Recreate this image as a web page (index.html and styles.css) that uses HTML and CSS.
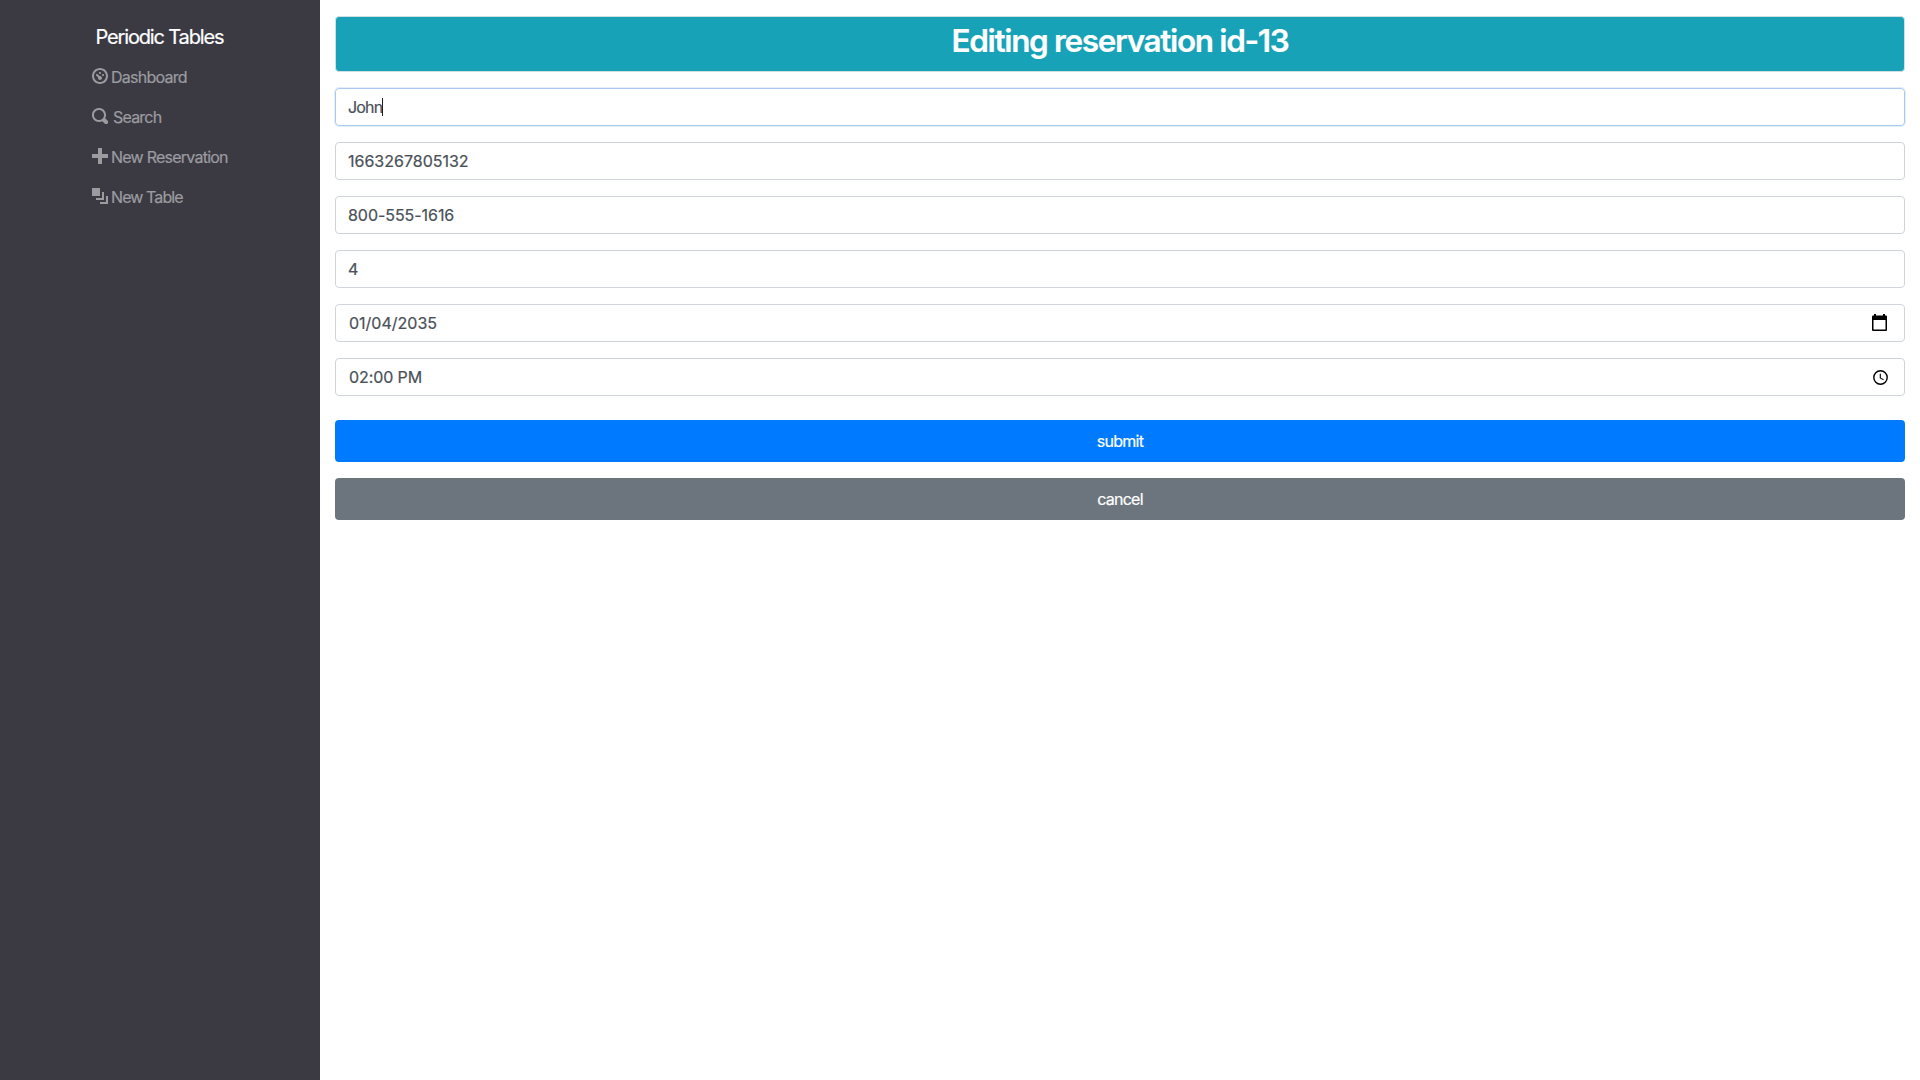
FILE: index.html
```html
<!DOCTYPE html>
<html lang="en">
<head>
<meta charset="utf-8">
<title>Periodic Tables</title>
<link rel="stylesheet" href="styles.css">
</head>
<body>
<div class="layout">
  <nav class="sidebar">
    <div class="sidebar-inner">
      <a class="brand">Periodic Tables</a>
      <ul class="menu">
        <li><svg class="icon" viewBox="0 0 8 8"><path d="M4 0c-2.2 0-4 1.8-4 4s1.8 4 4 4 4-1.8 4-4-1.8-4-4-4zm0 1c1.66 0 3 1.34 3 3s-1.34 3-3 3-3-1.34-3-3 1.34-3 3-3zm0 1c-.28 0-.5.22-.5.5s.22.5.5.5.5-.22.5-.5-.22-.5-.5-.5zm-1.66 1a.5.5 0 0 0-.19.84l.91.91c-.02.08-.06.16-.06.25 0 .55.45 1 1 1s1-.45 1-1-.45-1-1-1c-.09 0-.17.04-.25.06l-.91-.91a.5.5 0 0 0-.44-.16.5.5 0 0 0-.06 0zm3.16 0c-.28 0-.5.22-.5.5s.22.5.5.5.5-.22.5-.5-.22-.5-.5-.5z"/></svg><span class="dash">Dashboard</span></li>
        <li><svg class="icon" viewBox="0 0 8 8"><path d="M3.5 0c-1.93 0-3.5 1.57-3.5 3.5s1.57 3.5 3.5 3.5c.59 0 1.17-.14 1.66-.41a1 1 0 0 0 .13.13l1 1a1.02 1.02 0 1 0 1.44-1.44l-1-1a1 1 0 0 0-.16-.13c.27-.49.44-1.06.44-1.66 0-1.93-1.55-3.5-3.5-3.5zm0 1c1.39 0 2.5 1.11 2.5 2.5 0 .66-.24 1.27-.66 1.72-.01.01-.02.02-.03.03a1 1 0 0 0-.13.13c-.44.4-1.04.63-1.69.63-1.39 0-2.5-1.11-2.5-2.5s1.11-2.5 2.5-2.5z"/></svg><span class="search">Search</span></li>
        <li><svg class="icon" viewBox="0 0 8 8"><path d="M3 0v3h-3v2h3v3h2v-3h3v-2h-3v-3h-2z"/></svg><span class="new-reservation">New Reservation</span></li>
        <li><svg class="icon" viewBox="0 0 8 8"><path d="M0 0v4h4v-4h-4zm5 2v3h-3v1h4v-4h-1zm2 2v3h-3v1h4v-4h-1z"/></svg><span class="new-table">New Table</span></li>
      </ul>
    </div>
  </nav>
  <main class="content">
    <header class="card"><h2>Editing reservation id-13</h2></header>
    <form class="form">
      <div class="field focused"><span class="name">John</span><i class="caret"></i></div>
      <div class="field"><span class="number">1663267805132</span></div>
      <div class="field"><span class="phone">800-555-1616</span></div>
      <div class="field"><span>4</span></div>
      <div class="field picker"><span class="date">01/04/2035</span><svg class="cal" viewBox="0 0 15 17"><path fill-rule="evenodd" d="M2 0h2v1.5h7V0h2v1.5h1q1 0 1 1V16q0 1-1 1H1q-1 0-1-1V2.500q0-1 1-1h1zM1.500 6v9.500h12V6z"/></svg></div>
      <div class="field picker"><span class="time">02:00 PM</span><svg class="clock" viewBox="0 0 15 15"><circle cx="7.500" cy="7.500" r="6.700"/><path d="M7.300 3.700v4.200l3.300 2"/></svg></div>
      <button class="btn primary" type="button">submit</button>
      <button class="btn secondary" type="button">cancel</button>
    </form>
  </main>
</div>
</body>
</html>
```
FILE: styles.css
```css
* { box-sizing: border-box; }
body {
  margin: 0;
  background: #fff;
  font: 400 16px/24px Inter, "Liberation Sans", sans-serif;
  color: #495057;
  -webkit-text-stroke: .2px currentColor;
}
.layout { display: flex; min-height: 100vh; }
.sidebar {
  width: 320px;
  padding: 22px 0 0 92px;
  background: #3b3a43;
}
.sidebar-inner { display: flex; flex-direction: column; }
.brand {
  padding-left: 3.500px;
  font-size: 20px;
  line-height: 30px;
  letter-spacing: -1.150px;
  color: #fff;
  white-space: nowrap;
}
.menu { margin: 5px 0 0; padding: 0; list-style: none; color: #9c9ca0; }
.menu li { display: flex; align-items: center; height: 40px; white-space: nowrap; }
.icon { width: 16px; height: 16px; margin: -2px 3px 0 0; fill: currentColor; }
.dash { letter-spacing: -.740px; }
.new-reservation { letter-spacing: -.760px; }
.new-table { letter-spacing: -.900px; }
.search { margin-left: 2px; letter-spacing: -.800px; }
.content { flex: 1; padding: 16px 15px 0; }
.card {
  height: 56px;
  margin-bottom: 16px;
  border: 1px solid #d1dfe2;
  border-radius: 4px;
  background: #17a2b8;
  color: #fff;
  text-align: center;
}
h2 { margin: 5px 0 0; font-size: 31.500px; line-height: 38px; font-weight: 600; letter-spacing: -1.350px; }
.form { display: flex; flex-direction: column; gap: 16px; }
.field {
  display: flex;
  align-items: center;
  height: 38px;
  padding: 0 12px;
  border: 1px solid #ced4da;
  border-radius: 4px;
}
.name { letter-spacing: -.850px; }
.phone { letter-spacing: -.050px; }
.time { letter-spacing: -.100px; }
.focused { border-color: #a9c9ee; box-shadow: 0 0 0 1px #e4effb; }
.caret { width: 1px; height: 18px; background: #222; }
.picker { justify-content: space-between; padding: 0 17px 0 13px; }
.cal { width: 15px; height: 17px; margin-top: -1px; }
.clock { width: 15px; height: 15px; margin-right: -1px; fill: none; stroke: #000; stroke-width: 1.400; }
.clock path { stroke-width: 1.100; }
.btn {
  height: 42px;
  padding: 0;
  border: 0;
  border-radius: 4px;
  font: inherit;
  letter-spacing: -.750px;
  color: #fff;
}
.primary { margin-top: 8px; background: #007bff; }
.secondary { background: #6c757d; }
```
